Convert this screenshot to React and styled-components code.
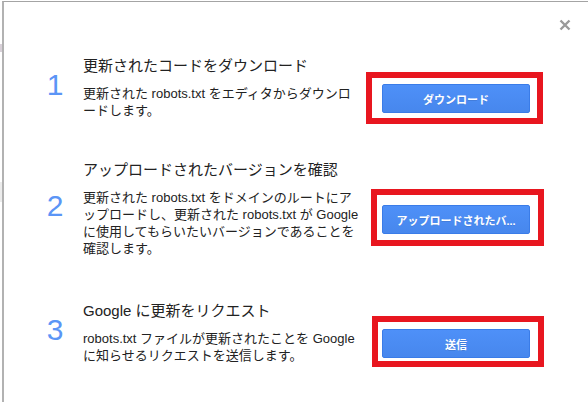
import React from "react";
import styled, { createGlobalStyle } from "styled-components";

const GlobalStyle = createGlobalStyle`
  html, body {
    margin: 0;
    padding: 0;
    background: #ffffff;
    overflow: hidden;
  }
  body {
    font-family: "Liberation Sans", "Noto Sans CJK JP", sans-serif;
  }
`;

const steps = [
  {
    num: "1",
    title: "更新されたコードをダウンロード",
    lines: ["更新された robots.txt をエディタからダウンロ", "ードします。"],
    button: "ダウンロード",
    space: 0,
    frame: { l: 16, r: 10, t: 12, b: 11 },
  },
  {
    num: "2",
    title: "アップロードされたバージョンを確認",
    lines: [
      "更新された robots.txt をドメインのルートにア",
      "ップロードし、更新された robots.txt が Google",
      "に使用してもらいたいバージョンであることを",
      "確認します。",
    ],
    button: "アップロードされたバ...",
    space: 41,
    frame: { l: 11, r: 11, t: 16, b: 12 },
  },
  {
    num: "3",
    title: "Google に更新をリクエスト",
    lines: [
      "robots.txt ファイルが更新されたことを Google",
      "に知らせるリクエストを送信します。",
    ],
    button: "送信",
    space: 44,
    frame: { l: 10, r: 11, t: 13, b: 9 },
  },
];

const App = () => {
  return (
    <>
      <GlobalStyle />
      <Screen>
        <Backdrop />
        <Dialog>
          <Close aria-label="close">
            <svg width="12" height="12" viewBox="0 0 12 12">
              <path d="M1.5 1.5 L10.5 10.5 M10.5 1.5 L1.5 10.5" stroke="#9a9a9a" strokeWidth="2.4" />
            </svg>
          </Close>
          <Steps>
            {steps.map((s) => (
              <Step key={s.num} $space={s.space}>
                <Num>{s.num}</Num>
                <Body>
                  <Title>{s.title}</Title>
                  <Desc>
                    {s.lines.map((l, i) => (
                      <span key={i}>
                        {l}
                        {i < s.lines.length - 1 && <br />}
                      </span>
                    ))}
                  </Desc>
                </Body>
                <Action>
                  <Frame $l={s.frame.l} $r={s.frame.r} $t={s.frame.t} $b={s.frame.b} />
                  <Button>{s.button}</Button>
                </Action>
              </Step>
            ))}
          </Steps>
        </Dialog>
      </Screen>
    </>
  );
};

export default App;

const Screen = styled.div`
  display: flex;
  width: 588px;
  height: 402px;
  overflow: hidden;
  background: #ffffff;
`;

const Backdrop = styled.div`
  width: 2px;
  flex: none;
  background: linear-gradient(
    #ffffff 0 44px,
    #d8d0d8 44px 52px,
    #ffffff 52px 182px,
    #ececec 182px 202px,
    #ffffff 202px
  );
`;

const Dialog = styled.div`
  position: relative;
  flex: none;
  width: 620px;
  margin-top: 1px;
  border-top: 1px solid #a4a4a4;
  border-left: 2px solid #b2b2b2;
  background: #ffffff;
  padding: 54px 0 0 26px;
  box-sizing: border-box;
`;

const Close = styled.div`
  position: absolute;
  top: 17px;
  left: 555px;
  width: 12px;
  height: 12px;
  display: flex;
`;

const Steps = styled.div`
  display: flex;
  flex-direction: column;
`;

const Step = styled.div`
  display: grid;
  grid-template-columns: 50px 299px 148px;
  column-gap: 3px;
  align-items: center;
  margin-top: ${(p) => p.$space}px;
`;

const Num = styled.div`
  font-family: "Liberation Sans", Arial, sans-serif;
  font-size: 30px;
  line-height: 30px;
  color: #5b95f6;
  text-align: center;
  padding-bottom: 6px;
`;

const Body = styled.div`
  display: flex;
  flex-direction: column;
  gap: 9px;
  color: #222222;
`;

const Title = styled.div`
  font-size: 15px;
  line-height: 20px;
  white-space: nowrap;
`;

const Desc = styled.div`
  font-size: 13px;
  line-height: 17px;
  white-space: nowrap;
`;

const Action = styled.div`
  position: relative;
  padding-top: 22px;
  margin-left: -3px;
`;

const Frame = styled.div`
  position: absolute;
  left: ${(p) => -p.$l}px;
  right: ${(p) => -p.$r}px;
  top: ${(p) => 22 - p.$t}px;
  bottom: ${(p) => -p.$b}px;
  border: 6px solid #e8161f;
  box-sizing: border-box;
  pointer-events: none;
`;

const Button = styled.div`
  width: 148px;
  height: 29px;
  box-sizing: border-box;
  display: flex;
  align-items: center;
  justify-content: center;
  border: 1px solid #3a7ce8;
  border-radius: 2px;
  background: linear-gradient(#4e90f8, #4787ed);
  color: #ffffff;
  font-size: 11px;
  font-weight: bold;
  white-space: nowrap;
  text-shadow: 0 1px 0 rgba(0, 0, 0, 0.1);
`;
